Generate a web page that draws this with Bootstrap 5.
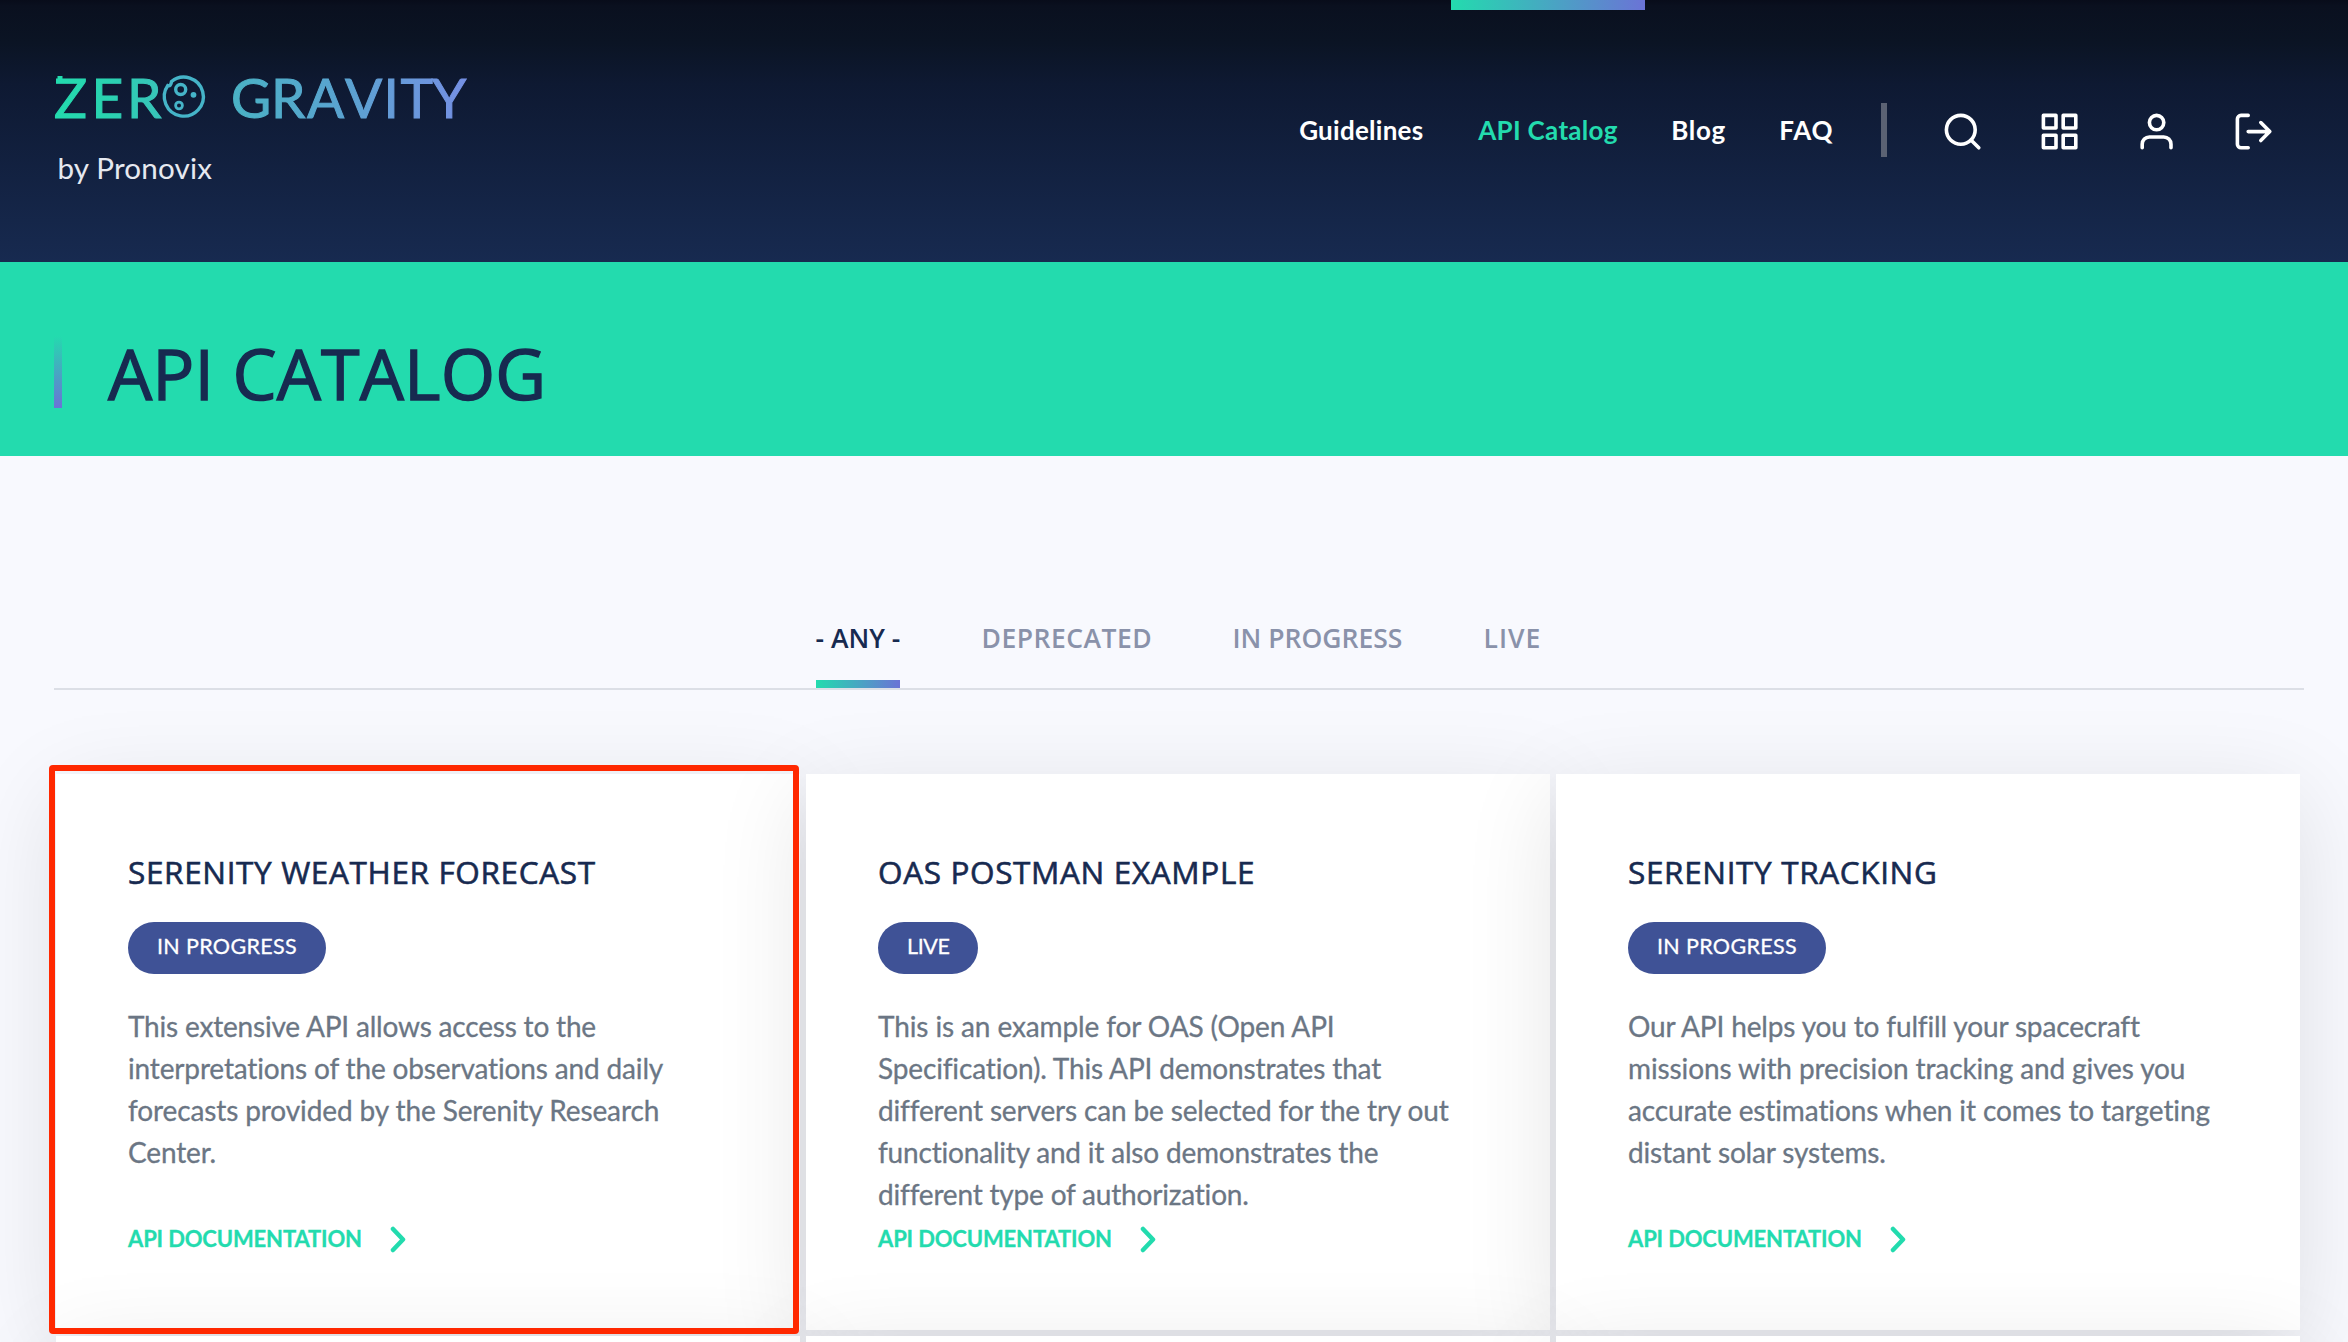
<!DOCTYPE html>
<html lang="en">
<head>
<meta charset="utf-8">
<title>API Catalog | Zero Gravity</title>
<link rel="stylesheet" href="https://cdn.jsdelivr.net/npm/bootstrap@5.3.0/dist/css/bootstrap.min.css">
<style>
body{font-family:Lato,"Open Sans",sans-serif;background:#f8f9fe;height:1342px;overflow:hidden;color:#6b7684}
.site-head{height:262px;background:linear-gradient(#080c1a 0,#0a101f 6px,#0b1424 16%,#0e1932 32%,#172a50 100%);padding:0 73px 0 54px}
.logo-art{width:420px;height:140px;margin-top:60px}
.logo-word{font:400 55px Lato,sans-serif;stroke:url(#lg);stroke-width:1px}
.logo-sub{font:400 29.6px Lato,sans-serif}
.main-nav .nav-link{height:262px;padding:0 0 2px 28px;font-size:26px;font-weight:700;color:#fff;position:relative;display:flex;align-items:center;white-space:nowrap}
.main-nav .nav-link.active{color:#23dbae;padding-left:27px}
.main-nav .nav-link.active::before{content:"";position:absolute;left:0;top:0;width:100%;height:10px;background:linear-gradient(90deg,#23dbae,#6b73d6)}
.main-nav .w-guide{width:180px;letter-spacing:.26px}
.main-nav .w-api{width:194px;letter-spacing:.3px}
.main-nav .w-blog{width:107px;letter-spacing:.7px;padding-left:26px}
.main-nav .w-faq{width:107px;letter-spacing:.8px;padding-left:27px}
.split{width:6px;height:54px;background:#5b6273;margin:103px 53.4px 0 22px}
.tool-row{gap:53.9px;padding-top:110.4px}
.tool-row svg{width:43.2px;height:43.2px;display:block}
.ico{fill:none;stroke:currentColor;stroke-width:2;stroke-linecap:round;stroke-linejoin:round}
.banner{height:194px;background:#23dbae;padding:74px 0 0 54px;gap:46px}
.banner-bar{width:8px;height:72px;background:linear-gradient(#23dbae,#6b73d6)}
.banner h1{font:400 70px/73px "Open Sans",sans-serif;color:#172a50;-webkit-text-stroke:1.4px #172a50;letter-spacing:.1px;margin:1px 0 0}
.tabs-wrap{margin:0 44px 0 54px;padding:154px 3px 0 0;border-bottom:2px solid #dcdfe6;gap:82px}
.tabs-wrap .nav-link{padding:0;height:78px;font:600 26.5px/56px "Open Sans",sans-serif;color:#8a92aa;white-space:nowrap;position:relative}
.tabs-wrap .nav-link.active{color:#172a50}
.tabs-wrap .nav-link.active::after{content:"";position:absolute;left:0;bottom:0;width:100%;height:8px;background:linear-gradient(90deg,#23dbae,#6b73d6)}
.w-any{width:84px}.w-dep{width:169px;letter-spacing:.5px}.w-prog{width:169px}.w-live{width:56px;letter-spacing:1px}
.api-grid{display:grid;grid-template-columns:repeat(3,744px);grid-auto-rows:556px;gap:6px;padding:84px 0 0 56px;height:652px;overflow:hidden}
.api-card{border:0;border-radius:0;background:#fff;box-shadow:0 20px 90px rgba(0,0,0,.11);padding:72px 72px 70px}
.api-card h2{font:400 31.5px/48px "Open Sans",sans-serif;color:#172a50;-webkit-text-stroke:.6px #172a50;letter-spacing:.64px;margin:2px 0 26px;white-space:nowrap}
.status{height:52px;border-radius:26px;background:#3f5296;color:#fff;font-size:21.5px;line-height:48px;padding:0 0 0 29px;letter-spacing:.34px;-webkit-text-stroke:.3px #fff}
.p-wide{width:198px}.p-small{width:100px;letter-spacing:-.4px}
.api-card p{font-size:28px;line-height:42px;margin:31px 0 -9px;white-space:nowrap;letter-spacing:-.15px;-webkit-text-stroke:.3px #6b7684}
.snug{letter-spacing:-.19px}
.loose{letter-spacing:-.11px}
.doc{color:#23dbae;font-size:22px;font-weight:700;line-height:42px;text-decoration:none;white-space:nowrap;letter-spacing:-.15px;-webkit-text-stroke:.3px #23dbae}
.doc svg{width:16px;height:27px}
.doc span{width:262px;flex:none}
.picked{position:absolute;left:-7px;top:-9px;width:750px;height:569px;border:6px solid #ff2800;border-radius:4px;z-index:5}
</style>
<script src="https://cdn.jsdelivr.net/npm/bootstrap@5.3.0/dist/js/bootstrap.bundle.min.js"></script>
</head>
<body>
<header class="site-head d-flex justify-content-between align-items-start">
<a href="#" class="d-block"><svg class="logo-art" viewBox="54 60 420 140">
<defs><linearGradient id="lg" gradientUnits="userSpaceOnUse" x1="55" y1="0" x2="466" y2="0"><stop offset="0" stop-color="#23dbae"/><stop offset=".12" stop-color="#29d3b0"/><stop offset=".4" stop-color="#48b4c4"/><stop offset=".7" stop-color="#5aa3d0"/><stop offset="1" stop-color="#7590e4"/></linearGradient></defs>
<text class="logo-word" y="118" fill="url(#lg)" x="54 91.500 127">ZER</text>
<path d="M60 76v6.500" stroke="#23dbae" stroke-width="5"/>
<g fill="none" stroke="#45b4c8"><path stroke-width="3.400" d="M171.500 81.500A19.500 19.500 0 1 1 167.800 85.500Q171 86.500 171.500 81.500Z"/><circle cx="180.700" cy="89.500" r="5" stroke-width="3.400"/><circle cx="179" cy="105.500" r="3.400" stroke-width="2.800"/><circle cx="193.500" cy="94.800" r="2.900" fill="#45b4c8" stroke="none"/></g>
<text class="logo-word" y="118" fill="url(#lg)" x="231 271 307 345 383.500 400.500 432">GRAVITY</text>
<text class="logo-sub" x="57.500" y="178.700" fill="#e6e9f0" textLength="154.500">by Pronovix</text>
</svg></a>
<div class="d-flex">
<nav class="main-nav nav flex-nowrap">
<a class="nav-link w-guide" href="#">Guidelines</a>
<a class="nav-link active w-api" href="#">API Catalog</a>
<a class="nav-link w-blog" href="#">Blog</a>
<a class="nav-link w-faq" href="#">FAQ</a>
</nav>
<div class="split"></div>
<div class="tool-row d-flex text-white">
<svg class="ico" viewBox="0 0 24 24"><circle cx="11" cy="11" r="8"/><path d="M21 21l-4.350-4.350"/></svg>
<svg class="ico" viewBox="0 0 24 24"><path d="M3 3h7v7H3zM14 3h7v7h-7zM14 14h7v7h-7zM3 14h7v7H3z"/></svg>
<svg class="ico" viewBox="0 0 24 24"><path d="M20 21v-2a4 4 0 0 0-4-4H8a4 4 0 0 0-4 4v2"/><circle cx="12" cy="7" r="4"/></svg>
<svg class="ico" viewBox="0 0 24 24"><path d="M9 21H5a2 2 0 0 1-2-2V5a2 2 0 0 1 2-2h4M16 17l5-5-5-5M21 12H9"/></svg>
</div>
</div>
</header>
<section class="banner d-flex"><div class="banner-bar"></div><h1>API CATALOG</h1></section>
<nav class="tabs-wrap nav justify-content-center">
<a class="nav-link active w-any" href="#">- ANY -</a>
<a class="nav-link w-dep" href="#">DEPRECATED</a>
<a class="nav-link w-prog" href="#">IN PROGRESS</a>
<a class="nav-link w-live" href="#">LIVE</a>
</nav>
<main class="api-grid">
<article class="card api-card"><h2>SERENITY WEATHER FORECAST</h2>
<div class="status p-wide">IN PROGRESS</div>
<p><span class="snug">This extensive API allows access to the</span><br>interpretations of the observations and daily<br><span class="loose">forecasts provided by the Serenity Research</span><br>Center.</p>
<a class="doc d-flex align-items-center mt-auto" href="#"><span>API DOCUMENTATION</span><svg viewBox="0 0 16 27" fill="none" stroke="#23dbae" stroke-width="4.500" stroke-linecap="round" stroke-linejoin="round"><path d="M3 3l10 10.500L3 24"/></svg></a>
<div class="picked"></div></article>
<article class="card api-card"><h2>OAS POSTMAN EXAMPLE</h2>
<div class="status p-small">LIVE</div>
<p><span class="loose">This is an example for OAS (Open API</span><br>Specification). This API demonstrates that<br>different servers can be selected for the try out<br><span class="snug">functionality and it also demonstrates the</span><br><span class="snug">different type of authorization.</span></p>
<a class="doc d-flex align-items-center mt-auto" href="#"><span>API DOCUMENTATION</span><svg viewBox="0 0 16 27" fill="none" stroke="#23dbae" stroke-width="4.500" stroke-linecap="round" stroke-linejoin="round"><path d="M3 3l10 10.500L3 24"/></svg></a></article>
<article class="card api-card"><h2>SERENITY TRACKING</h2>
<div class="status p-wide">IN PROGRESS</div>
<p>Our API helps you to fulfill your spacecraft<br><span class="loose">missions with precision tracking and gives you</span><br><span class="loose">accurate estimations when it comes to targeting</span><br>distant solar systems.</p>
<a class="doc d-flex align-items-center mt-auto" href="#"><span>API DOCUMENTATION</span><svg viewBox="0 0 16 27" fill="none" stroke="#23dbae" stroke-width="4.500" stroke-linecap="round" stroke-linejoin="round"><path d="M3 3l10 10.500L3 24"/></svg></a></article>
<article class="card api-card"></article><article class="card api-card"></article><article class="card api-card"></article>
</main>
</body>
</html>
